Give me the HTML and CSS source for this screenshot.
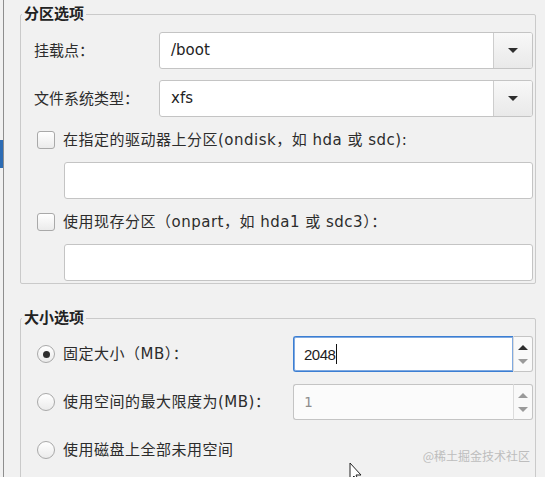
FILE: index.html
```html
<!DOCTYPE html>
<html lang="zh-CN">
<head>
<meta charset="utf-8">
<title>分区选项</title>
<link rel="stylesheet" href="styles.css">
</head>
<body>
<div class="window">
  <div class="rail"><div class="rail-sel"></div></div>
  <main class="content">
    <fieldset class="group">
      <legend class="group-title">分区选项</legend>
      <div class="group-body part-body">
        <div class="form-grid">
          <span class="field-label">挂载点：</span>
          <div class="combo"><span class="combo-text">/boot</span><span class="combo-btn"><span class="tri-down"></span></span></div>
          <span class="field-label">文件系统类型：</span>
          <div class="combo"><span class="combo-text">xfs</span><span class="combo-btn"><span class="tri-down"></span></span></div>
        </div>
        <div class="check-row"><span class="checkbox"></span><span>在指定的驱动器上分区(ondisk，如 hda 或 sdc):</span></div>
        <div class="entry"></div>
        <div class="check-row"><span class="checkbox"></span><span>使用现存分区（onpart，如 hda1 或 sdc3）：</span></div>
        <div class="entry"></div>
      </div>
    </fieldset>
    <fieldset class="group group-size">
      <legend class="group-title">大小选项</legend>
      <div class="group-body size-body">
        <div class="radio-row"><span class="radio radio-on"></span><span>固定大小（MB）：</span></div>
        <div class="spin spin-focus">
          <div class="spin-input"><span class="spin-value">2048</span><span class="caret"></span></div>
          <div class="spin-btns"><span class="tri-up"></span><span class="tri-down tri-dim"></span></div>
        </div>
        <div class="radio-row"><span class="radio"></span><span>使用空间的最大限度为(MB)：</span></div>
        <div class="spin spin-disabled">
          <div class="spin-input"><span class="spin-value mono">1</span></div>
          <div class="spin-btns"><span class="tri-up tri-dim"></span><span class="tri-down tri-dim"></span></div>
        </div>
        <div class="radio-row"><span class="radio"></span><span>使用磁盘上全部未用空间</span></div>
        <div></div>
      </div>
    </fieldset>
  </main>
  <div class="watermark">@稀土掘金技术社区</div>
  <svg class="cursor" width="14" height="22" viewBox="0 0 14 22"><path d="M1 1 L1 18 L5 14 L8 21 L10 20 L7 13 L12 13 Z" fill="#fff" stroke="#222" stroke-width="1"/></svg>
</div>
</body>
</html>
```
FILE: styles.css
```css
html, body {
  margin: 0;
  padding: 0;
}
body {
  background: #f1f1f1;
  font-family: "DejaVu Sans", "Noto Sans CJK SC", sans-serif;
  font-size: 15px;
  color: #2c2c2c;
  overflow: hidden;
  height: 477px;
}
.window {
  position: relative;
  display: flex;
  height: 477px;
  overflow: hidden;
}
.rail {
  flex: none;
  width: 3px;
  border-right: 1px solid #8e8e8e;
}
.rail-sel {
  margin-top: 140px;
  height: 28px;
  background: #2d6cb4;
}
.content {
  flex: 1;
  min-width: 0;
  padding: 4px 9px 0 16px;
}
.group {
  margin: 0;
  padding: 0;
  border: 1px solid #cacaca;
  border-radius: 2px;
  min-width: 0;
}
.group-title {
  margin-left: 1px;
  padding: 0 2px;
  font-weight: bold;
  font-size: 15px;
  line-height: 20px;
  color: #222;
}
.group-body {
  padding: 8px 2px 2px 13px;
}
.form-grid {
  display: grid;
  grid-template-columns: 125px 1fr;
  row-gap: 11px;
  align-items: center;
}
.field-label {
  line-height: 20px;
}
.combo {
  display: flex;
  height: 37px;
  box-sizing: border-box;
  border: 1px solid #c4c4c4;
  border-radius: 3px;
  background: #fff;
  overflow: hidden;
}
.combo-text {
  flex: 1;
  padding-left: 11px;
  line-height: 35px;
  color: #222;
}
.combo-btn {
  flex: none;
  width: 38px;
  border-left: 1px solid #cdcdcd;
  background: linear-gradient(#f8f8f8, #e9e9e9);
  display: flex;
  align-items: center;
  justify-content: center;
}
.tri-down {
  width: 0;
  height: 0;
  border-left: 5px solid transparent;
  border-right: 5px solid transparent;
  border-top: 5px solid #2e2e2e;
}
.tri-up {
  width: 0;
  height: 0;
  border-left: 5px solid transparent;
  border-right: 5px solid transparent;
  border-bottom: 5px solid #2e2e2e;
}
.tri-dim.tri-down {
  border-top-color: #9a9a9a;
}
.tri-dim.tri-up {
  border-bottom-color: #9a9a9a;
}
.check-row {
  display: flex;
  align-items: center;
  gap: 8px;
  height: 20px;
  margin-top: 13px;
  padding-left: 3px;
  line-height: 20px;
  letter-spacing: 0.5px;
}
.checkbox {
  flex: none;
  width: 18px;
  height: 18px;
  box-sizing: border-box;
  border: 1px solid #a9a9a9;
  border-radius: 3px;
  background: linear-gradient(#ffffff, #ebebeb);
}
.entry {
  height: 37px;
  box-sizing: border-box;
  margin-top: 12px;
  margin-left: 30px;
  border: 1px solid #c4c4c4;
  border-radius: 3px;
  background: #fff;
}
.group-size {
  margin-top: 24px;
  height: 175px;
}
.size-body {
  display: grid;
  grid-template-columns: 259px 1fr;
  grid-auto-rows: 36px;
  row-gap: 12px;
  align-items: center;
}
.radio-row {
  display: flex;
  align-items: center;
  gap: 8px;
  padding-left: 3px;
  line-height: 20px;
  letter-spacing: 0.5px;
}
.radio {
  flex: none;
  width: 18px;
  height: 18px;
  box-sizing: border-box;
  border: 1px solid #a9a9a9;
  border-radius: 50%;
  background: linear-gradient(#ffffff, #ebebeb);
  display: flex;
  align-items: center;
  justify-content: center;
}
.radio-on::after {
  content: "";
  width: 7px;
  height: 7px;
  border-radius: 50%;
  background: #2e2e2e;
}
.spin {
  display: flex;
  height: 36px;
}
.spin-input {
  flex: 1;
  display: flex;
  align-items: center;
  padding-left: 10px;
  box-sizing: border-box;
  border: 1px solid #c4c4c4;
  border-right: none;
  border-radius: 3px 0 0 3px;
  background: #fff;
}
.spin-focus .spin-input {
  border-color: #3b7ed3;
  box-shadow: inset 0 0 0 1px #7fa9e0;
}
.spin-disabled .spin-input {
  background: #fbfbfb;
}
.spin-value {
  font-family: "Liberation Sans", "Noto Sans", sans-serif;
  font-size: 15px;
  color: #1e1e1e;
  letter-spacing: -0.5px;
}
.spin-value.mono {
  font-family: "DejaVu Sans Mono", monospace;
  font-size: 14px;
  color: #8e8e8e;
  letter-spacing: 0;
}
.caret {
  width: 1px;
  height: 20px;
  margin-left: 1px;
  background: #111;
}
.spin-btns {
  flex: none;
  width: 20px;
  box-sizing: border-box;
  border: 1px solid #c4c4c4;
  border-left: 1px solid #dcdcdc;
  border-radius: 0 3px 3px 0;
  background: #f9f9f9;
  display: flex;
  flex-direction: column;
  align-items: center;
  justify-content: space-around;
  padding: 3px 0;
}
.watermark {
  position: absolute;
  right: 15px;
  top: 448px;
  font-family: "Noto Sans CJK SC", sans-serif;
  font-size: 12px;
  color: #bdbdbd;
  line-height: 16px;
}
.cursor {
  position: absolute;
  left: 349px;
  top: 462px;
}
```
